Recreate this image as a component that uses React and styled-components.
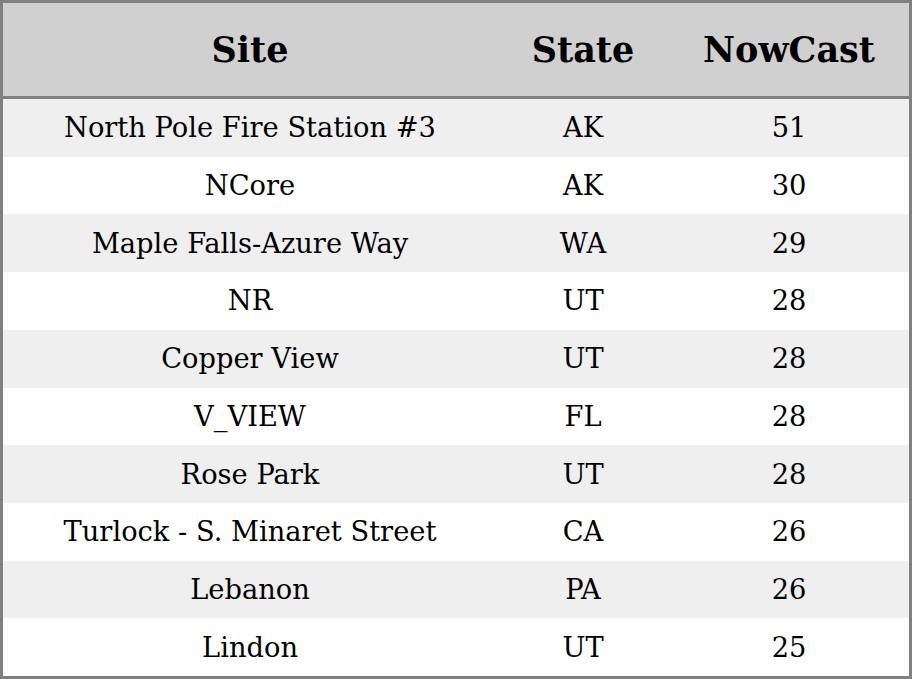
import React from 'react';
import styled, { createGlobalStyle } from 'styled-components';

const GlobalStyle = createGlobalStyle`
  html, body {
    margin: 0;
    padding: 0;
    background: #fff;
  }
`;

const Table = styled.div`
  box-sizing: border-box;
  width: 912px;
  height: 679px;
  border: 3px solid #808080;
  display: grid;
  grid-template-columns: 494px 172px 240px;
  grid-template-rows: 96px repeat(10, 1fr);
  font-family: "DejaVu Serif", serif;
  color: #000;
`;

const HeadCell = styled.div`
  display: flex;
  align-items: center;
  justify-content: center;
  background: #d0d0d0;
  border-bottom: 3px solid #808080;
  font-weight: bold;
  font-size: 35px;
`;

const Cell = styled.div`
  display: flex;
  align-items: center;
  justify-content: center;
  background: ${({ $striped }) => ($striped ? '#efefef' : '#fff')};
  font-size: 27.3px;
`;

const rows = [
  ['North Pole Fire Station #3', 'AK', 51],
  ['NCore', 'AK', 30],
  ['Maple Falls-Azure Way', 'WA', 29],
  ['NR', 'UT', 28],
  ['Copper View', 'UT', 28],
  ['V_VIEW', 'FL', 28],
  ['Rose Park', 'UT', 28],
  ['Turlock - S. Minaret Street', 'CA', 26],
  ['Lebanon', 'PA', 26],
  ['Lindon', 'UT', 25],
];

export default function App() {
  return (
    <>
      <GlobalStyle />
      <Table>
        <HeadCell>Site</HeadCell>
        <HeadCell>State</HeadCell>
        <HeadCell>NowCast</HeadCell>
        {rows.map(([site, state, value], i) => (
          <React.Fragment key={site}>
            <Cell $striped={i % 2 === 0}>{site}</Cell>
            <Cell $striped={i % 2 === 0}>{state}</Cell>
            <Cell $striped={i % 2 === 0}>{value}</Cell>
          </React.Fragment>
        ))}
      </Table>
    </>
  );
}
